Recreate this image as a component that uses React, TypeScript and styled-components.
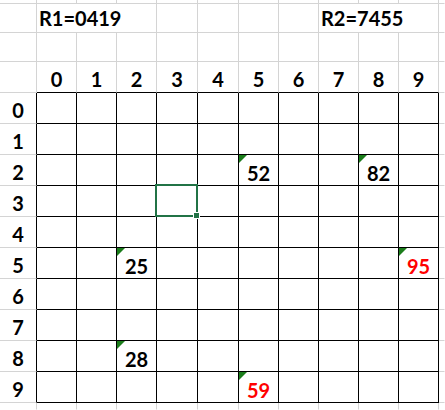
import React from "react";
import styled, { createGlobalStyle } from "styled-components";

const GRAY = "#d4d4d4";
const BLACK = "#000000";
const GREEN = "#217346";
const NONE = "transparent";

// column widths, including the right grid line
const COLS = [40, 40, 40, 41, 41, 40, 40, 40, 40, 40];
const TEMPLATE = `37px ${COLS.map((w) => `${w}px`).join(" ")} 1fr`;

type Mark = { value: string; red?: boolean };
const marks: Record<string, Mark> = {
  "2-5": { value: "52" },
  "2-8": { value: "82" },
  "5-2": { value: "25" },
  "5-9": { value: "95", red: true },
  "8-2": { value: "28" },
  "9-5": { value: "59", red: true },
};

const SELECTED = "3-3";
const digits = Array.from({ length: 10 }, (_, i) => i);

const GlobalStyle = createGlobalStyle`
  html, body {
    margin: 0;
    padding: 0;
    background: #ffffff;
    overflow: hidden;
  }
  body {
    font-family: Lato, "Open Sans", "Liberation Sans", sans-serif;
  }
`;

const Sheet = styled.div`
  width: 100%;
  display: flex;
  flex-direction: column;
  background: #ffffff;
`;

const Row = styled.div<{ $h: number }>`
  display: grid;
  grid-template-columns: ${TEMPLATE};
  height: ${(p) => p.$h}px;
`;

type CellProps = {
  $right?: string;
  $bottom?: string;
  $span?: number;
  $left?: boolean;
  $pad?: number;
  $red?: boolean;
};

const Cell = styled.div<CellProps>`
  box-sizing: border-box;
  position: relative;
  min-width: 0;
  grid-column: ${(p) => (p.$span ? `span ${p.$span}` : "auto")};
  border-right: 1px solid ${(p) => p.$right ?? GRAY};
  border-bottom: 1px solid ${(p) => p.$bottom ?? GRAY};
  display: flex;
  align-items: flex-end;
  justify-content: ${(p) => (p.$left ? "flex-start" : "center")};
  padding-left: ${(p) => (p.$left ? "2px" : "0")};
  padding-bottom: ${(p) => p.$pad ?? 0}px;
  font-size: 20px;
  font-weight: 700;
  line-height: 24px;
  color: ${(p) => (p.$red ? "#ff0000" : "#000000")};
  white-space: nowrap;
`;

const Flag = styled.span`
  position: absolute;
  top: 0;
  left: 0;
  width: 0;
  height: 0;
  border-top: 8px solid #1b7d1b;
  border-right: 8px solid transparent;
`;

const Selection = styled.span`
  position: absolute;
  left: -2px;
  top: -2px;
  right: -1px;
  bottom: -1px;
  border: 2px solid ${GREEN};
  pointer-events: none;
  z-index: 2;
`;

const Handle = styled.span`
  position: absolute;
  right: -4px;
  bottom: -4px;
  width: 5px;
  height: 5px;
  background: ${GREEN};
  border: 1px solid #ffffff;
  z-index: 3;
`;

const PlainRow = ({ h, last }: { h: number; last?: boolean }) => (
  <Row $h={h}>
    <Cell $bottom={last ? NONE : GRAY} />
    {digits.map((c) => (
      <Cell key={c} $bottom={last ? NONE : GRAY} />
    ))}
    <Cell $right={NONE} $bottom={last ? NONE : GRAY} />
  </Row>
);

export default function App() {
  return (
    <>
      <GlobalStyle />
      <Sheet>
        <PlainRow h={4} />

        <Row $h={29}>
          <Cell />
          <Cell $span={3} $left $pad={2}>
            R1=0419
          </Cell>
          <Cell />
          <Cell />
          <Cell />
          <Cell />
          <Cell $span={3} $left $pad={2}>
            R2=7455
          </Cell>
          <Cell $right={NONE} />
        </Row>

        <PlainRow h={29} />

        <Row $h={31}>
          <Cell />
          {digits.map((c) => (
            <Cell key={c} $bottom={BLACK} $pad={1}>
              {c}
            </Cell>
          ))}
          <Cell $right={NONE} />
        </Row>

        {digits.map((r) => (
          <Row key={r} $h={31}>
            <Cell $right={BLACK} $pad={1}>
              {r}
            </Cell>
            {digits.map((c) => {
              const key = `${r}-${c}`;
              const mark = marks[key];
              return (
                <Cell key={c} $right={BLACK} $bottom={BLACK} $red={mark?.red}>
                  {mark && <Flag />}
                  {mark?.value}
                  {key === SELECTED && (
                    <Selection>
                      <Handle />
                    </Selection>
                  )}
                </Cell>
              );
            })}
            <Cell $right={NONE} />
          </Row>
        ))}

        <PlainRow h={7} last />
      </Sheet>
    </>
  );
}
